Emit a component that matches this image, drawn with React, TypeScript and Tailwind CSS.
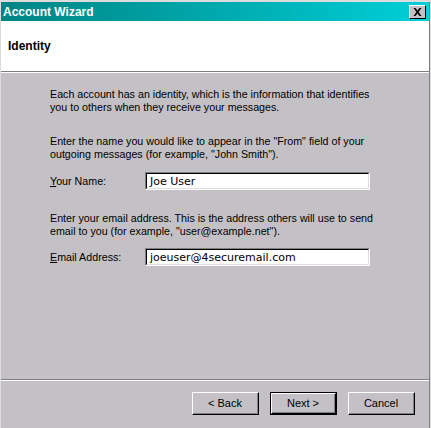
import React from "react";

const font = { fontFamily: '"Liberation Sans", Arial, sans-serif' };

function Btn({ label, def }: { label: React.ReactNode; def?: boolean }) {
  return (
    <div className={def ? "border border-black" : ""}>
      <div className={`${def ? "w-[65px] h-[21px]" : "w-[67px] h-[23px]"} border-t border-l border-white border-r border-b border-r-black border-b-black`}>
        <div className="w-full h-full border-r border-b border-[#808080] flex items-center justify-center text-[11px] text-black">
          {label}
        </div>
      </div>
    </div>
  );
}

function Field({ value }: { value: string }) {
  return (
    <div className="w-[225px] h-[18px] border-t border-l border-[#808080] border-r border-b border-r-white border-b-white">
      <div className="w-full h-full border-t border-l border-black border-r border-b border-r-[#dfdfdf] border-b-[#dfdfdf] bg-white flex items-center pl-[3px]">
        <span className="text-[11px] text-black leading-none" style={{ fontFamily: '"DejaVu Sans", sans-serif' }}>{value}</span>
      </div>
    </div>
  );
}

export default function App() {
  return (
    <div className="w-[431px] h-[428px] bg-[#dcdcdc] pt-[2px] pl-[1px] flex" style={font}>
      <div className="w-[428px] h-[426px] bg-[#c3c1c5] flex flex-col">
        <div className="h-[19px] bg-gradient-to-r from-[#008484] to-[#00d0d8] flex items-center justify-between pl-[2px] pr-[3px]">
          <span className="text-white font-bold text-[12px]">Account Wizard</span>
          <div className="w-[17px] h-[14px] bg-[#c3c1c5] border-t border-l border-white border-r border-b border-r-black border-b-black flex items-center justify-center">
            <svg width="9" height="8" viewBox="0 0 9 8">
              <path d="M0.5 0h2l2 2.6 2-2.6h2L5.6 4l2.9 4h-2l-2-2.6-2 2.6h-2l2.9-4z" fill="black" />
            </svg>
          </div>
        </div>
        <div className="h-[51px] bg-white border-b border-[#808080] pl-[7px] pt-[12px]">
          <span className="font-bold text-[12px] text-black">Identity</span>
        </div>
        <div className="h-px bg-white" />
        <div className="flex-1 pl-[49px] text-[10.7px] text-black leading-[13px]">
          <p className="mt-[15px]">Each account has an identity, which is the information that identifies<br />you to others when they receive your messages.</p>
          <p className="mt-[21px]">Enter the name you would like to appear in the "From" field of your<br />outgoing messages (for example, "John Smith").</p>
          <div className="mt-[11px] flex items-center">
            <span className="w-[95px]"><u>Y</u>our Name:</span>
            <Field value="Joe User" />
          </div>
          <p className="mt-[22px]">Enter your email address. This is the address others will use to send<br />email to you (for example, "user@example.net").</p>
          <div className="mt-[10px] flex items-center">
            <span className="w-[95px]"><u>E</u>mail Address:</span>
            <Field value="joeuser@4securemail.com" />
          </div>
        </div>
        <div className="h-px bg-[#808080]" />
        <div className="h-px bg-white" />
        <div className="h-[47px] flex items-start justify-end pt-[11px] pr-[14px] gap-[11px]">
          <Btn label="< Back" />
          <Btn label="Next >" def />
          <Btn label="Cancel" />
        </div>
      </div>
      <div className="w-px h-[426px] bg-[#808080]" />
    </div>
  );
}
